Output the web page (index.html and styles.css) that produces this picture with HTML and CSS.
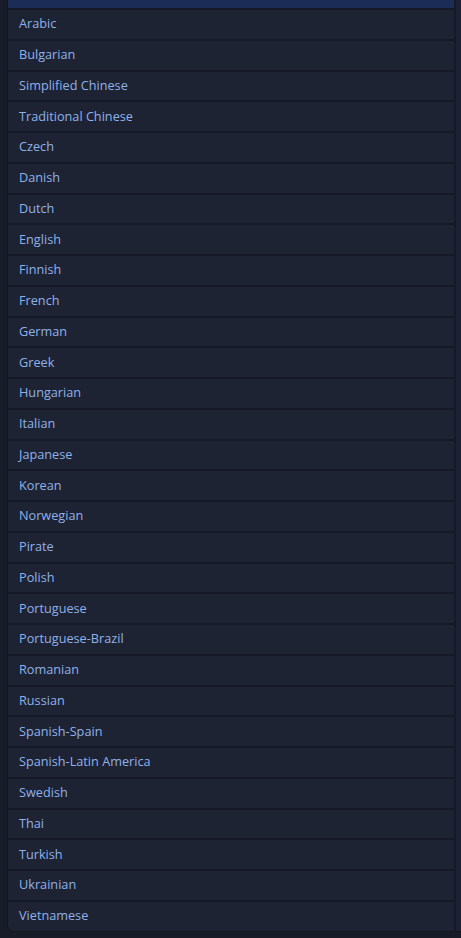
FILE: index.html
```html
<!DOCTYPE html>
<html>
<head>
<meta charset="utf-8">
<link rel="stylesheet" href="styles.css">
</head>
<body>
<div class="frame">
  <ul class="list">
    <li class="item selected" aria-hidden="true"></li>
    <li class="item">Arabic</li>
    <li class="item">Bulgarian</li>
    <li class="item">Simplified Chinese</li>
    <li class="item">Traditional Chinese</li>
    <li class="item">Czech</li>
    <li class="item">Danish</li>
    <li class="item">Dutch</li>
    <li class="item">English</li>
    <li class="item">Finnish</li>
    <li class="item">French</li>
    <li class="item">German</li>
    <li class="item">Greek</li>
    <li class="item">Hungarian</li>
    <li class="item">Italian</li>
    <li class="item">Japanese</li>
    <li class="item">Korean</li>
    <li class="item">Norwegian</li>
    <li class="item">Pirate</li>
    <li class="item">Polish</li>
    <li class="item">Portuguese</li>
    <li class="item">Portuguese-Brazil</li>
    <li class="item">Romanian</li>
    <li class="item">Russian</li>
    <li class="item">Spanish-Spain</li>
    <li class="item">Spanish-Latin America</li>
    <li class="item">Swedish</li>
    <li class="item">Thai</li>
    <li class="item">Turkish</li>
    <li class="item">Ukrainian</li>
    <li class="item">Vietnamese</li>
  </ul>
  <div class="track"></div>
</div>
</body>
</html>
```
FILE: styles.css
```css
html, body {
  margin: 0;
  padding: 0;
  background: #181c28;
  height: 938px;
  overflow: hidden;
}
.frame {
  display: flex;
  margin-left: 7px;
  height: 931px;
  border-left: 1px solid #131722;
  border-bottom: 1px solid #131722;
  border-bottom-left-radius: 7px;
  overflow: hidden;
  background: #151a26;
}
.list {
  list-style: none;
  margin: 0;
  padding: 0;
  width: 446px;
  display: flex;
  flex-direction: column;
  gap: 2px;
}
.item {
  flex: 0 0 28.75px;
  box-sizing: border-box;
  display: flex;
  align-items: center;
  padding-left: 11px;
  padding-bottom: 2px;
  background: #1e2333;
  color: #8fb1ea;
  font-family: "Open Sans", sans-serif;
  font-size: 12.7px;
}
.item.selected {
  flex-basis: 8px;
  padding: 0;
  background: #1b2d57;
}
.track {
  margin-left: 2px;
  flex: 1;
  background: #1d2133;
}
```
